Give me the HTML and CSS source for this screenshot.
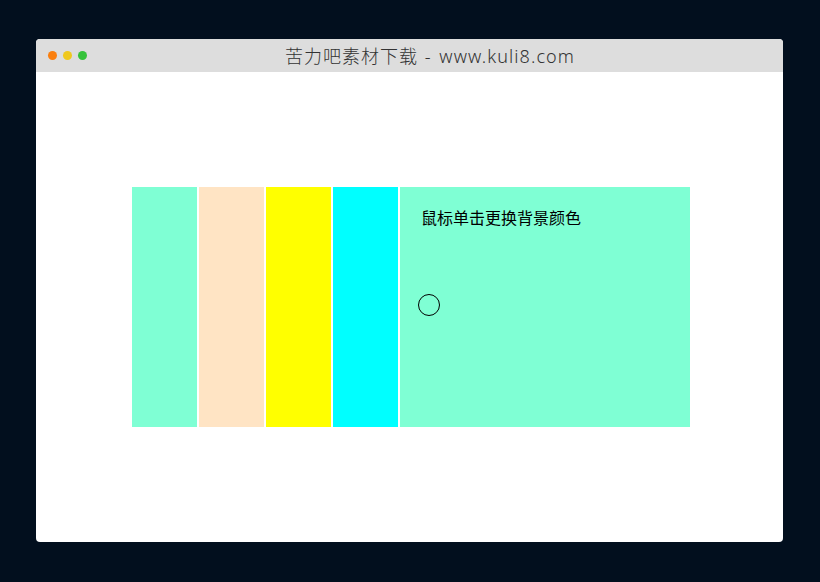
FILE: index.html
```html
<!DOCTYPE html>
<html lang="zh">
<head>
<meta charset="utf-8">
<title>苦力吧素材下载</title>
<link rel="stylesheet" href="styles.css">
</head>
<body>
<div class="window">
  <div class="titlebar">
    <div class="dots">
      <span class="dot orange"></span>
      <span class="dot yellow"></span>
      <span class="dot green"></span>
    </div>
    <div class="title"><span class="title-cn">苦力吧素材下载</span> <span class="title-en">- www.kuli8.com</span></div>
  </div>
  <div class="content">
    <ul class="panels">
      <li class="panel aqua"></li>
      <li class="panel bisque"></li>
      <li class="panel yellow-bg"></li>
      <li class="panel cyan"></li>
      <li class="panel aqua wide">
        <p class="hint">鼠标单击更换背景颜色</p>
        <span class="ring"></span>
      </li>
    </ul>
  </div>
</div>
</body>
</html>
```
FILE: styles.css
```css
html, body {
  margin: 0;
  padding: 0;
}
body {
  background: #020f1e;
  width: 820px;
  height: 582px;
  padding: 39px 37px 0 36px;
  box-sizing: border-box;
  font-family: "Noto Sans CJK SC", "Noto Sans", sans-serif;
}
.window {
  width: 747px;
  height: 503px;
  background: #ffffff;
  border-radius: 4px;
  overflow: hidden;
  display: flex;
  flex-direction: column;
}
.titlebar {
  height: 33px;
  background: #dddddd;
  display: flex;
  align-items: center;
  flex-shrink: 0;
}
.dots {
  display: flex;
  gap: 6px;
  padding-left: 12px;
  width: 249px;
  box-sizing: border-box;
}
.dot {
  width: 9px;
  height: 9px;
  border-radius: 50%;
  display: block;
}
.orange { background: #fa7f0f; }
.yellow { background: #efc81e; }
.green { background: #35c23a; }
.title {
  font-family: "Noto Sans", "Noto Sans CJK SC", sans-serif;
  font-size: 18px;
  font-weight: 300;
  color: #333333;
  line-height: 33px;
  word-spacing: 2px;
  white-space: nowrap;
}
.title-cn {
  font-family: "Noto Sans CJK SC", sans-serif;
  letter-spacing: 1px;
}
.title-en {
  letter-spacing: 1.1px;
}
.content {
  flex: 1;
  display: flex;
  align-items: center;
  padding-left: 96px;
}
.panels {
  list-style: none;
  margin: 0;
  padding: 0;
  display: flex;
  gap: 2px;
  height: 240px;
  width: 558px;
  margin-top: -1px;
}
.panel {
  width: 65px;
  height: 100%;
  flex-shrink: 0;
}
.aqua { background: #7fffd4; }
.bisque { background: #ffe4c4; }
.yellow-bg { background: #ffff00; }
.cyan { background: #00ffff; }
.panel.wide {
  width: 290px;
  padding: 18px 0 0 21px;
  box-sizing: border-box;
  display: flex;
  flex-direction: column;
  align-items: flex-start;
}
.hint {
  margin: 0;
  font-size: 16px;
  line-height: 24px;
  color: #000;
}
.ring {
  display: block;
  width: 20px;
  height: 20px;
  border: 1px solid #000;
  border-radius: 50%;
  margin-top: 65px;
  margin-left: -3px;
}
```
